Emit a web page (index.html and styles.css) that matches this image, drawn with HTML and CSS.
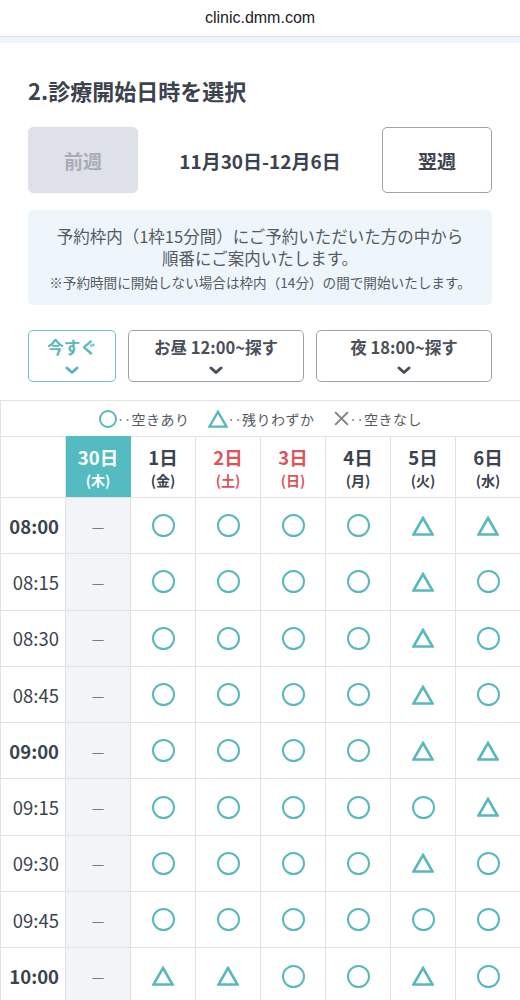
FILE: index.html
```html
<!DOCTYPE html>
<html lang="ja">
<head>
    <meta charset="UTF-8">
    <meta name="viewport" content="width=device-width, initial-scale=1.0">
    <title>診療開始日時を選択</title>
    <link rel="stylesheet" href="styles.css">
</head>
<body>
    <svg class="defs" width="0" height="0">
        <symbol id="tri" viewBox="0 0 22 20">
            <polygon points="11,2 20.5,18.5 1.5,18.5" fill="none" stroke="currentColor" stroke-width="2.6" stroke-linejoin="miter"/>
        </symbol>
        <symbol id="chev" viewBox="0 0 14 9">
            <polyline points="2,2 7,6.5 12,2" fill="none" stroke="currentColor" stroke-width="3" stroke-linecap="round" stroke-linejoin="round"/>
        </symbol>
        <symbol id="cross" viewBox="0 0 16 16">
            <path d="M2 2 L14 14 M14 2 L2 14" fill="none" stroke="currentColor" stroke-width="1.8"/>
        </symbol>
    </svg>

    <div class="urlbar">clinic.dmm.com</div>
    <div class="strip"></div>

    <div class="section">
        <h2 class="title">2.診療開始日時を選択</h2>

        <div class="week-nav">
            <button class="week-btn disabled">前週</button>
            <span class="week-range">11月30日-12月6日</span>
            <button class="week-btn">翌週</button>
        </div>

        <div class="notice">
            <p class="notice-main">予約枠内（1枠15分間）にご予約いただいた方の中から<br>順番にご案内いたします。</p>
            <p class="notice-sub">※予約時間に開始しない場合は枠内（14分）の間で開始いたします。</p>
        </div>

        <div class="filters">
            <button class="filter now">今すぐ<svg class="chev"><use href="#chev"/></svg></button>
            <button class="filter">お昼 12:00~探す<svg class="chev"><use href="#chev"/></svg></button>
            <button class="filter">夜 18:00~探す<svg class="chev"><use href="#chev"/></svg></button>
        </div>
    </div>

    <div class="schedule">
        <div class="legend">
            <span class="legend-item"><span class="ring small"></span>‥空きあり</span>
            <span class="legend-item"><svg class="tri small"><use href="#tri"/></svg>‥残りわずか</span>
            <span class="legend-item"><svg class="cross"><use href="#cross"/></svg>‥空きなし</span>
        </div>

        <div class="grid" id="grid">
            <div class="cell head"></div>
            <div class="cell head today"><span class="day">30日</span><span class="wday">(木)</span></div>
            <div class="cell head"><span class="day">1日</span><span class="wday">(金)</span></div>
            <div class="cell head holiday"><span class="day">2日</span><span class="wday">(土)</span></div>
            <div class="cell head holiday"><span class="day">3日</span><span class="wday">(日)</span></div>
            <div class="cell head"><span class="day">4日</span><span class="wday">(月)</span></div>
            <div class="cell head"><span class="day">5日</span><span class="wday">(火)</span></div>
            <div class="cell head"><span class="day">6日</span><span class="wday">(水)</span></div>
        </div>
    </div>

    <script>
        // o = 空きあり, t = 残りわずか
        var slots = [
            ["08:00", "oooott"],
            ["08:15", "ooooto"],
            ["08:30", "ooooto"],
            ["08:45", "ooooto"],
            ["09:00", "oooott"],
            ["09:15", "ooooot"],
            ["09:30", "ooooto"],
            ["09:45", "oooooo"],
            ["10:00", "ttooto"]
        ];
        var grid = document.getElementById('grid');
        var html = "";
        slots.forEach(function (row) {
            var time = row[0];
            var marks = row[1];
            var hour = time.slice(3) === "00" ? " hour" : "";
            html += '<div class="cell time' + hour + '">' + time + '</div>';
            html += '<div class="cell closed">—</div>';
            for (var i = 0; i < marks.length; i++) {
                if (marks[i] === "o") {
                    html += '<div class="cell"><span class="ring"></span></div>';
                } else {
                    html += '<div class="cell"><svg class="tri"><use href="#tri"/></svg></div>';
                }
            }
        });
        grid.insertAdjacentHTML('beforeend', html);
    </script>
</body>
</html>
```

FILE: styles.css
```css
body {
    margin: 0;
    font-family: "Noto Sans CJK JP", "Noto Sans", sans-serif;
    color: #3b434e;
    background: #fff;
}
.defs {
    position: absolute;
}
.urlbar {
    height: 36px;
    line-height: 36px;
    text-align: center;
    font-family: "Liberation Sans", sans-serif;
    font-size: 16px;
    color: #1d1d1f;
    border-bottom: 1px solid #dfe6ea;
}
.strip {
    height: 6px;
    background: #eef5f9;
}
.section {
    padding: 0 28px;
}
.title {
    margin: 33px 0 0;
    font-size: 22px;
    line-height: 28px;
    font-weight: bold;
    color: #3b434e;
}
.week-nav {
    margin-top: 23px;
    display: flex;
    align-items: center;
    justify-content: space-between;
}
.week-btn {
    width: 110px;
    height: 66px;
    font-family: inherit;
    font-size: 19px;
    font-weight: bold;
    color: #3b434e;
    background: #fff;
    border: 1px solid #9da1a8;
    border-radius: 5px;
}
.week-btn.disabled {
    background: #dfe1e8;
    border-color: #dfe1e8;
    color: #a8acb5;
}
.week-range {
    font-size: 19px;
    font-weight: bold;
    color: #3b434e;
}
.notice {
    margin-top: 17px;
    padding: 15px 4px 13px;
    background: #eef6fc;
    border-radius: 5px;
    text-align: center;
    color: #555b62;
}
.notice p {
    margin: 0;
}
.notice-main {
    font-size: 16.5px;
    line-height: 22px;
}
.notice-sub {
    margin-top: 4px !important;
    font-size: 13.6px;
    line-height: 19px;
}
.filters {
    margin-top: 25px;
    display: flex;
    gap: 12px;
}
.filter {
    flex: 1;
    height: 52px;
    padding: 5px 0 0;
    display: flex;
    flex-direction: column;
    align-items: center;
    justify-content: flex-start;
    font-family: inherit;
    font-size: 16.5px;
    line-height: 23px;
    font-weight: bold;
    color: #4a5059;
    background: #fff;
    border: 1px solid #9da1a8;
    border-radius: 5px;
}
.filter.now {
    flex: 0 0 88px;
    color: #58b8bb;
    border-color: #70c3c4;
}
.chev {
    width: 14px;
    height: 9px;
    margin-top: 7px;
}
.schedule {
    margin-top: 18px;
    border-top: 1px solid #e2e2e2;
    border-left: 1px solid #e2e2e2;
}
.legend {
    height: 35px;
    display: flex;
    align-items: center;
    justify-content: center;
    gap: 18px;
    font-size: 14px;
    color: #555b62;
    letter-spacing: 0.5px;
}
.legend-item {
    display: flex;
    align-items: center;
}
.ring {
    display: inline-block;
    width: 23px;
    height: 23px;
    box-sizing: border-box;
    border: 2.8px solid #58b8bb;
    border-radius: 50%;
}
.ring.small {
    width: 18px;
    height: 18px;
    border-width: 2.2px;
}
.tri {
    width: 22px;
    height: 20px;
    color: #58b8bb;
}
.tri.small {
    width: 20px;
    height: 18px;
}
.cross {
    width: 17px;
    height: 17px;
    color: #7d8088;
}
.grid {
    display: grid;
    grid-template-columns: repeat(8, 65px);
    grid-template-rows: 61px;
    grid-auto-rows: 56.3px;
}
.cell {
    box-sizing: border-box;
    border-top: 1px solid #e2e2e2;
    border-right: 1px solid #e2e2e2;
    display: flex;
    align-items: center;
    justify-content: center;
}
.cell.head {
    flex-direction: column;
    font-weight: bold;
    color: #3b434e;
}
.cell.head .day {
    font-size: 18.5px;
    line-height: 26px;
}
.cell.head .wday {
    font-size: 14px;
    line-height: 21px;
}
.cell.today {
    background: #54bcc0;
    color: #fff;
    border-color: #54bcc0;
}
.cell.holiday {
    color: #de535b;
}
.cell.time {
    justify-content: flex-end;
    padding-right: 6px;
    font-size: 18.5px;
    color: #3b434e;
}
.cell.time.hour {
    font-weight: bold;
}
.cell.closed {
    background: #f3f4f8;
    color: #777b82;
    font-size: 14px;
}
```
